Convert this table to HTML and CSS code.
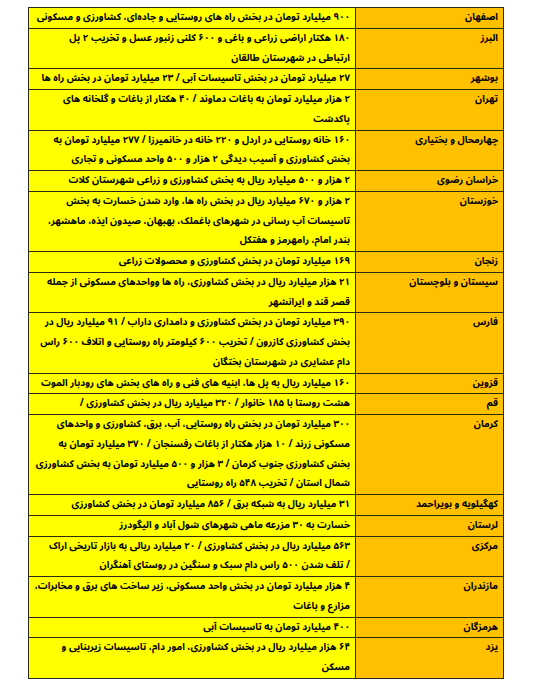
FILE: index.html
```html
<!DOCTYPE html>
<html lang="fa" dir="rtl">
<head>
<meta charset="utf-8">
<title>خسارت سیل استان‌ها</title>
<link rel="stylesheet" href="styles.css">
</head>
<body>
<table class="damage">
<tbody>
<tr><td class="prov">اصفهان</td><td class="desc">۹۰۰ میلیارد تومان در بخش راه های روستایی و جاده‌ای، کشاورزی و مسکونی</td></tr>
<tr><td class="prov">البرز</td><td class="desc">۱۸۰ هکتار اراضی زراعی و باغی و ۶۰۰ کلنی زنبور عسل و تخریب ۲ پل<br>ارتباطی در شهرستان طالقان</td></tr>
<tr><td class="prov">بوشهر</td><td class="desc">۲۷ میلیارد تومان در بخش تاسیسات آبی / ۲۳ میلیارد تومان در بخش راه ها</td></tr>
<tr><td class="prov">تهران</td><td class="desc">۲ هزار میلیارد تومان به باغات دماوند / ۴۰ هکتار از باغات و گلخانه های<br>پاکدشت</td></tr>
<tr><td class="prov">چهارمحال و بختیاری</td><td class="desc">۱۶۰ خانه روستایی در اردل و ۲۲۰ خانه در خانمیرزا / ۲۷۷ میلیارد تومان به<br>بخش کشاورزی و آسیب دیدگی ۲ هزار و ۵۰۰ واحد مسکونی و تجاری</td></tr>
<tr><td class="prov">خراسان رضوی</td><td class="desc">۲ هزار و ۵۰۰ میلیارد ریال به بخش کشاورزی و زراعی شهرستان کلات</td></tr>
<tr><td class="prov">خوزستان</td><td class="desc">۲ هزار و ۶۷۰ میلیارد ریال در بخش راه ها، وارد شدن خسارت به بخش<br>تاسیسات آب رسانی در شهرهای باغملک، بهبهان، صیدون ایذه، ماهشهر،<br>بندر امام، رامهرمز و هفتکل</td></tr>
<tr><td class="prov">زنجان</td><td class="desc">۱۶۹ میلیارد تومان در بخش کشاورزی و محصولات زراعی</td></tr>
<tr><td class="prov">سیستان و بلوچستان</td><td class="desc">۲۱ هزار میلیارد ریال در بخش کشاورزی، راه ها وواحدهای مسکونی از جمله<br>قصر قند و ایرانشهر</td></tr>
<tr><td class="prov">فارس</td><td class="desc">۳۹۰ میلیارد تومان در بخش کشاورزی و دامداری داراب / ۹۱ میلیارد ریال در<br>بخش کشاورزی کازرون / تخریب ۶۰۰ کیلومتر راه روستایی و اتلاف ۶۰۰ راس<br>دام عشایری در شهرستان بختگان</td></tr>
<tr><td class="prov">قزوین</td><td class="desc">۱۶۰ میلیارد ریال به پل ها، ابنیه های فنی و راه های بخش های رودبار الموت</td></tr>
<tr><td class="prov">قم</td><td class="desc">هشت روستا با ۱۸۵ خانوار / ۳۲۰ میلیارد ریال در بخش کشاورزی /</td></tr>
<tr><td class="prov">کرمان</td><td class="desc">۳۰۰ میلیارد تومان در بخش راه روستایی، آب، برق، کشاورزی و واحدهای<br>مسکونی زرند / ۱۰ هزار هکتار از باغات رفسنجان / ۳۷۰ میلیارد تومان به<br>بخش کشاورزی جنوب کرمان / ۳ هزار و ۵۰۰ میلیارد تومان به بخش کشاورزی<br>شمال استان / تخریب ۵۴۸ راه روستایی</td></tr>
<tr><td class="prov">کهگیلویه و بویراحمد</td><td class="desc">۳۱ میلیارد ریال به شبکه برق / ۸۵۶ میلیارد تومان در بخش کشاورزی</td></tr>
<tr><td class="prov">لرستان</td><td class="desc">خسارت به ۳۰ مزرعه ماهی شهرهای شول آباد و الیگودرز</td></tr>
<tr><td class="prov">مرکزی</td><td class="desc">۵۶۳ میلیارد ریال در بخش کشاورزی / ۲۰ میلیارد ریالی به بازار تاریخی اراک<br>/ تلف شدن ۵۰۰ راس دام سبک و سنگین در روستای آهنگران</td></tr>
<tr><td class="prov">مازندران</td><td class="desc">۴ هزار میلیارد تومان در بخش واحد مسکونی، زیر ساخت های برق و مخابرات،<br>مزارع و باغات</td></tr>
<tr><td class="prov">هرمزگان</td><td class="desc">۴۰۰ میلیارد تومان به تاسیسات آبی</td></tr>
<tr><td class="prov">یزد</td><td class="desc">۶۴ هزار میلیارد ریال در بخش کشاورزی، امور دام، تاسیسات زیربنایی و<br>مسکن</td></tr>
</tbody>
</table>
</body>
</html>
```
FILE: styles.css
```css
html, body {
  margin: 0;
  padding: 0;
  background: #ffffff;
}

body {
  padding: 7px 0 0 0;
}

.damage {
  border-collapse: collapse;
  width: 476px;
  margin-right: 33px;
  table-layout: fixed;
  font-family: "Noto Sans Arabic", "Noto Naskh Arabic", "DejaVu Sans Condensed", "DejaVu Sans", sans-serif;
  font-stretch: condensed;
  font-weight: bold;
  font-size: 9.7px;
  color: #000;
}

.damage td {
  border: 1px solid #2b2b1a;
  padding: 0 5px 0 3px;
  line-height: 19.75px;
  vertical-align: top;
  text-align: right;
  white-space: nowrap;
  overflow: hidden;
}

.prov {
  width: 139px;
  background: #ffc000;
}

.desc {
  background: #ffff00;
}
```
